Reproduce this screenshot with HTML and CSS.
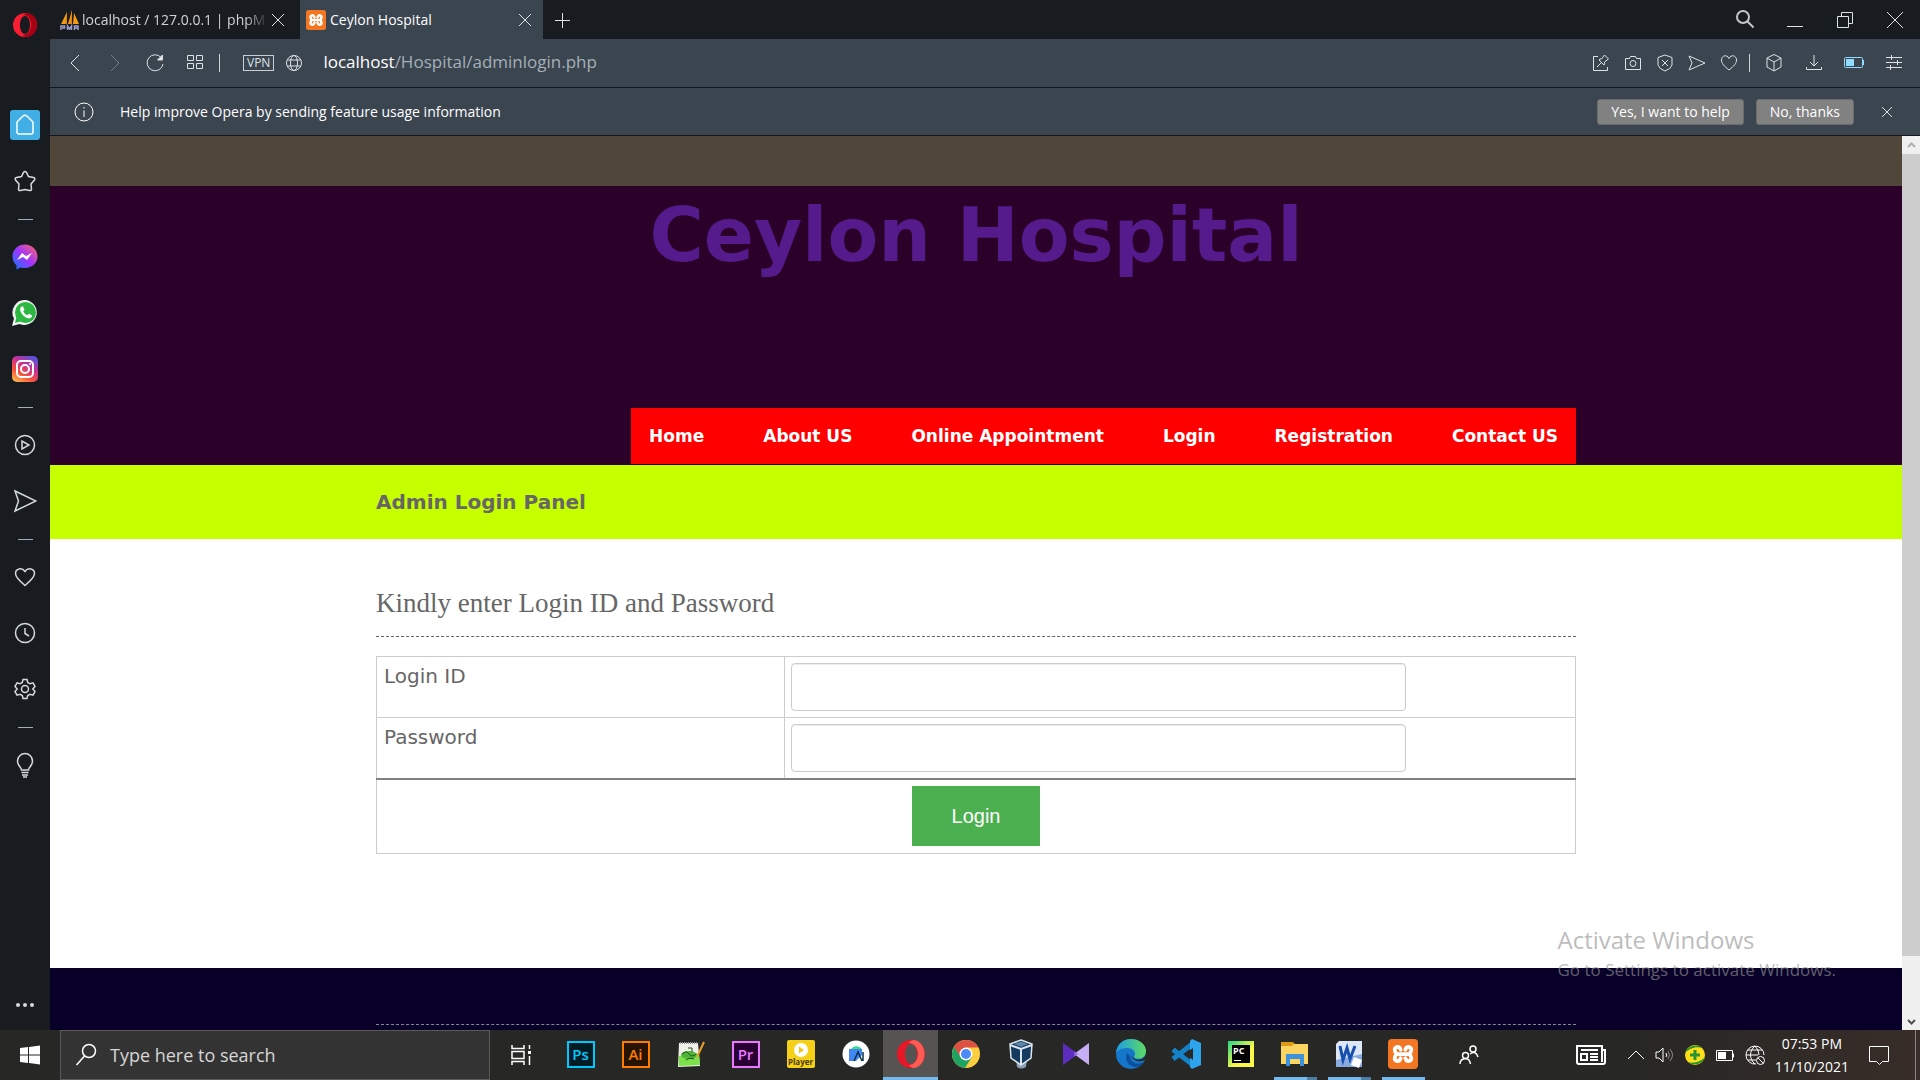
FILE: index.html
```html
<!DOCTYPE html>
<html lang="en">
<head>
<meta charset="utf-8">
<title>Ceylon Hospital</title>
<link rel="stylesheet" href="styles.css">
</head>
<body>
<div class="desktop">
  <aside class="sidebar">
    <button class="side-logo" aria-label="Opera menu"><svg width="26" height="26" viewBox="0 0 26 26"><path fill="#fa1e32" fill-rule="evenodd" d="M13 1a12 12 0 1 0 0 24 12 12 0 0 0 0-24zm0 3c3 0 5 4 5 9s-2 9-5 9-5-4-5-9 2-9 5-9z"/><path fill="#a70014" d="M15 1c7 1 10 6 10 12s-3 11-10 12c-2 0-3-1-4-2 5 0 8-4 8-10S16 3 11 3c1-1 2-2 4-2z"/></svg></button>
    <button class="side-item" aria-label="Home"><span class="home-tile"><svg class="line" width="22" height="24" viewBox="0 0 22 24"><path d="M3 9l6-6q2-1.500 4 0l6 6v10q0 2-2 2H5q-2 0-2-2z"/></svg></span></button>
    <button class="side-item" aria-label="Bookmarks"><svg class="line" width="24" height="24" viewBox="0 0 24 24"><path d="M10.500 3.500q1.500-2 3 0L15.500 7.500l5 1q2 .500 1 2.500l-3.500 4 .500 5q0 2-2 1.500l-4.500-1-4.500 1q-2 .500-2-1.500l.500-5L2.500 11q-1-2 1-2.500l5-1z"/></svg></button>
    <span class="side-rule"></span>
    <button class="side-item" aria-label="Messenger"><svg width="26" height="26" viewBox="0 0 26 26"><defs><linearGradient id="ms" x1="0" y1="1" x2="1" y2="0"><stop offset="0" stop-color="#0a7cff"/><stop offset=".5" stop-color="#a033ff"/><stop offset="1" stop-color="#ff6a60"/></linearGradient></defs><path fill="url(#ms)" d="M13 0.500C6 .500.500 5.500.500 12.500c0 3.500 1.500 6.500 4 9V25.500l4-2c1.500.500 3 .500 4.500.500 7 0 12.500-5 12.500-11.500S20 .500 13 .500z"/><path fill="#fff" d="M5 16l5-7 4 3 6-3-5 7-4-3z"/></svg></button>
    <button class="side-item" aria-label="WhatsApp"><svg width="26" height="26" viewBox="0 0 26 26"><path fill="#f2f2f2" d="M13.500 0A12.500 12.500 0 0 0 2 18.500L0 26l7.500-2A12.500 12.500 0 1 0 13.500 0z"/><circle cx="13.500" cy="12.500" r="10.500" fill="#2cb742"/><path fill="#2cb742" d="M3 23l1.500-6 4 4.500z"/><path fill="#fff" d="M9 7c1-1 2-1 2.500.500l1 2-1.300 1.700c1 2 2 3 4 4l1.800-1.500 2.500 1.300c1 .500.500 2-.500 2.700-2 1.500-5 .300-7.500-2C9 13 7 9.500 9 7z"/></svg></button>
    <button class="side-item" aria-label="Instagram"><svg width="26" height="26" viewBox="0 0 26 26"><defs><linearGradient id="ig" x1=".1" y1="1" x2=".7" y2="0"><stop offset="0" stop-color="#ffc04d"/><stop offset=".35" stop-color="#f7503c"/><stop offset=".7" stop-color="#c52f9b"/><stop offset="1" stop-color="#5b51d8"/></linearGradient></defs><rect width="26" height="26" rx="5" fill="url(#ig)"/><g fill="none" stroke="#fff" stroke-width="2"><rect x="5" y="5" width="16" height="16" rx="4"/><circle cx="13" cy="13" r="4"/></g><circle cx="18" cy="8" r="1" fill="#fff"/></svg></button>
    <span class="side-rule"></span>
    <button class="side-item" aria-label="Player"><svg class="line" width="24" height="24" viewBox="0 0 24 24"><circle cx="12" cy="12" r="9.500"/><path d="M9 8v8l7-4z"/></svg></button>
    <button class="side-item" aria-label="My Flow"><svg class="line" width="24" height="24" viewBox="0 0 24 24"><path d="M2 2l21 10L2 22l3.500-10z"/></svg></button>
    <span class="side-rule"></span>
    <button class="side-item" aria-label="Favourites"><svg class="line" width="24" height="24" viewBox="0 0 24 24"><path d="M12 20.500C6 15.500 2.500 12 2.500 8.500c0-5 6.500-6.500 9.500-2 3-4.500 9.500-3 9.500 2 0 3.500-3.500 7-9.500 12z"/></svg></button>
    <button class="side-item" aria-label="History"><svg class="line" width="24" height="24" viewBox="0 0 24 24"><circle cx="12" cy="12" r="9.500"/><path d="M12 7v5.500l4 2.500"/></svg></button>
    <button class="side-item" aria-label="Settings"><svg class="line" width="24" height="24" viewBox="0 0 24 24"><path d="M10 2.500h4l.7 3 2.300 1.300 3-1 2 3.600L19.800 12l2.200 2.600-2 3.600-3-1-2.300 1.300-.7 3h-4l-.7-3L7 17.200l-3 1-2-3.600L4.200 12 2 9.400l2-3.600 3 1 2.300-1.300z"/><circle cx="12" cy="12" r="3.500"/></svg></button>
    <span class="side-rule"></span>
    <button class="side-item" aria-label="Tips"><svg class="line" width="24" height="26" viewBox="0 0 24 26"><path d="M8.500 18c0-3-4-4-4-9a7.500 7.500 0 0 1 15 0c0 5-4 6-4 9zM8.500 20.500h7M9 23h6M10 25h4"/></svg></button>
    <button class="side-more" aria-label="More"><svg width="20" height="6" viewBox="0 0 20 6" fill="#d5dae0"><circle cx="3" cy="3" r="2"/><circle cx="10" cy="3" r="2"/><circle cx="17" cy="3" r="2"/></svg></button>
  </aside>

  <main class="browser">
    <div class="tabs">
      <div class="tab">
        <svg width="20" height="20" viewBox="0 0 20 20"><path fill="#f89c0e" d="M7 2L1 14h6zM12 0L8 14h4zM14 3l-1 11h6z"/><path fill="#d98019" d="M7 2v12H5zM12 0v14h-2z"/><path stroke="#9c9ec8" stroke-width="1.500" fill="none" d="M1 20v-4h3.500v2H2M7.500 20v-4l2 3 2-3v4M14.500 20v-4H18v4M14.500 18H18"/></svg>
        <span class="tab-name faded">localhost / 127.0.0.1 | phpM</span>
        <button class="icon" aria-label="Close tab"><svg class="line" width="16" height="16" viewBox="0 0 16 16"><path d="M2 2l12 12M14 2L2 14"/></svg></button>
      </div>
      <div class="tab active">
        <svg width="20" height="20" viewBox="0 0 32 32"><rect width="32" height="32" rx="4" fill="#f37623"/><path d="M13.500 11.500q-1-3.500-4-3Q5 10 9 16q-4 6 .500 7.500 3 .500 4-3M18.500 11.500q1-3.500 4-3Q27 10 23 16q4 6-.500 7.500-3 .500-4-3M10 16h12" fill="none" stroke="#fff" stroke-width="4" stroke-linecap="round"/></svg>
        <span class="tab-name">Ceylon Hospital</span>
        <button class="icon" aria-label="Close tab"><svg class="line" width="16" height="16" viewBox="0 0 16 16"><path d="M2 2l12 12M14 2L2 14"/></svg></button>
      </div>
      <button class="icon new-tab" aria-label="New tab"><svg class="line" width="16" height="16" viewBox="0 0 16 16"><path d="M8.500 1v15M1 8.500h15"/></svg></button>
      <div class="window-controls">
        <button class="icon" aria-label="Search tabs"><svg class="line bold" width="20" height="20" viewBox="0 0 20 20"><circle cx="8" cy="7" r="6"/><path d="M12.500 11.500l6 6"/></svg></button>
        <button class="icon" aria-label="Minimize"><svg class="line" width="20" height="20" viewBox="0 0 20 20"><path d="M2 16.500h16"/></svg></button>
        <button class="icon" aria-label="Restore"><svg class="line" width="20" height="20" viewBox="0 0 20 20"><path d="M2.500 6.500h11v11h-11zM6.500 6V2.500h11v11H14"/></svg></button>
        <button class="icon" aria-label="Close"><svg class="line" width="20" height="20" viewBox="0 0 20 20"><path d="M2 2l16 16M18 2L2 18"/></svg></button>
      </div>
    </div>

    <div class="toolbar">
      <div class="nav-tools">
        <button class="icon" aria-label="Back"><svg class="line" width="20" height="20" viewBox="0 0 20 20"><path d="M14 2l-8 8 8 8"/></svg></button>
        <button class="icon dim" aria-label="Forward"><svg class="line" width="20" height="20" viewBox="0 0 20 20"><path d="M6 2l8 8-8 8"/></svg></button>
        <button class="icon" aria-label="Reload"><svg class="line" width="20" height="20" viewBox="0 0 20 20"><path d="M16.500 5A8 8 0 1 0 18 11"/><path d="M17.500 2v5h-5z" fill="currentColor"/></svg></button>
        <button class="icon" aria-label="Speed dial"><svg class="line" width="20" height="20" viewBox="0 0 20 20"><path d="M2.500 2.500h6v5h-6zM11.500 2.500h6v5h-6zM2.500 10.500h6v5h-6zM11.500 10.500h6v5h-6z"/></svg></button>
      </div>
      <span class="bar"></span>
      <button class="vpn">VPN</button>
      <button class="icon" aria-label="Site information"><svg class="line" width="18" height="18" viewBox="0 0 18 18"><circle cx="9" cy="9" r="7.500"/><ellipse cx="9" cy="9" rx="3.500" ry="7.500"/><path d="M2.500 6h13M2.500 12h13"/></svg></button>
      <div class="address"><strong>localhost</strong>/Hospital/adminlogin.php</div>
      <div class="page-tools">
        <button class="icon" aria-label="Pin"><svg class="line" width="20" height="20" viewBox="0 0 20 20"><path d="M7 3.500H2.500v14h14V14M6 14l4-4M8 7l5 5q1-1 .500-3l4-3-4-4-3 4q-2-.500-2.500 1z"/></svg></button>
        <button class="icon" aria-label="Snapshot"><svg class="line" width="20" height="20" viewBox="0 0 20 20"><path d="M2.500 5.500h4l1-2h5l1 2h4v11h-15z"/><circle cx="10" cy="10.500" r="3"/></svg></button>
        <button class="icon" aria-label="Ad blocker"><svg class="line" width="20" height="20" viewBox="0 0 20 20"><path d="M10 2l7 2.500V12q-1 4-7 6-6-2-7-6V4.500zM7 7l6 6M13 7l-6 6"/></svg></button>
        <button class="icon" aria-label="Send to My Flow"><svg class="line" width="20" height="20" viewBox="0 0 20 20"><path d="M2 3l16 7-16 7 3-7z"/></svg></button>
        <button class="icon" aria-label="Add to bookmarks"><svg class="line" width="20" height="20" viewBox="0 0 20 20"><path d="M10 17C5 13 2.500 10.500 2.500 7c0-4.500 5.500-6 7.500-1.500C12 1 17.500 2.500 17.500 7c0 3.500-2.500 6-7.500 10z"/></svg></button>
      </div>
      <span class="bar"></span>
      <div class="browser-tools">
        <button class="icon" aria-label="Crypto wallet"><svg class="line" width="20" height="20" viewBox="0 0 20 20"><path d="M10 1.500l7 3.500v9l-7 4-7-4V5zM3 5l7 4 7-4M10 9v9"/></svg></button>
        <button class="icon" aria-label="Downloads"><svg class="line" width="20" height="20" viewBox="0 0 20 20"><path d="M10 2v11M6 9l4 4 4-4M2.500 14v2.500h15V14"/></svg></button>
        <button class="icon" aria-label="Battery saver"><svg width="20" height="20" viewBox="0 0 20 20"><rect x=".500" y="4.500" width="18" height="10" rx="1" fill="none" stroke="#8fdcff"/><path fill="#8fdcff" d="M2 6h8v7H2zM19 7h1v5h-1z"/></svg></button>
        <button class="icon" aria-label="Easy setup"><svg class="line" width="20" height="20" viewBox="0 0 20 20"><path d="M2 4.500h16M2 9.500h16M2 14.500h16M7.500 2v5M13.500 7v5M6.500 12v5"/></svg></button>
      </div>
    </div>

    <div class="notice">
      <svg class="line" width="20" height="20" viewBox="0 0 20 20"><circle cx="10" cy="10" r="9"/><path d="M10 8.500V15M10 5v1.500"/></svg>
      <p>Help improve Opera by sending feature usage information</p>
      <button class="notice-button">Yes, I want to help</button>
      <button class="notice-button">No, thanks</button>
      <button class="icon" aria-label="Dismiss"><svg class="line" width="14" height="14" viewBox="0 0 14 14"><path d="M2 2l10 10M12 2L2 12"/></svg></button>
    </div>

    <div class="viewport">
      <div class="page">
        <div class="topbar"></div>
        <header class="header">
          <div class="container">
            <h1><a href="#">Ceylon Hospital</a></h1>
            <nav class="menu">
              <a href="#">Home</a><a href="#">About US</a><a href="#">Online Appointment</a><a href="#">Login</a><a href="#">Registration</a><a href="#">Contact US</a>
            </nav>
          </div>
        </header>
        <div class="banner"><div class="container"><h2>Admin Login Panel</h2></div></div>
        <section class="content">
          <div class="container">
            <h3>Kindly enter Login ID and Password</h3>
            <form>
              <table class="login">
                <tr><td class="label"><label for="login">Login ID</label></td><td><input class="field" type="text" id="login"></td></tr>
                <tr><td class="label"><label for="password">Password</label></td><td><input class="field" type="password" id="password"></td></tr>
                <tr class="submit-row"><td colspan="2"><button class="submit" type="button">Login</button></td></tr>
              </table>
            </form>
          </div>
        </section>
        <footer class="footer"><div class="container"></div></footer>
      </div>
      <div class="scrollbar">
        <svg width="18" height="18" viewBox="0 0 18 18"><path d="M6 11l3.500-3.500L13 11" fill="none" stroke="#b0b0b0" stroke-width="2"/></svg>
        <span class="track"><span class="thumb"></span></span>
        <svg width="18" height="18" viewBox="0 0 18 18"><path d="M6 8l3.500 3.500L13 8" fill="none" stroke="#505050" stroke-width="2"/></svg>
      </div>
      <div class="watermark"><p class="watermark-title">Activate Windows</p><p>Go to Settings to activate Windows.</p></div>
    </div>
  </main>

  <div class="taskbar">
    <button class="start" aria-label="Start"><svg width="20" height="20" viewBox="0 0 20 20" fill="#fff"><path d="M0 3l8-1v7.500H0zM9 1.900L20 .500v9H9zM0 10.500h8V18l-8-1zM9 10.500h11v9L9 18.100z"/></svg></button>
    <label class="search"><svg width="22" height="26" viewBox="0 0 22 26" fill="none" stroke="#fff" stroke-width="1.500"><circle cx="14" cy="9" r="6.500"/><path d="M9.500 14L1.500 23"/></svg><input type="text" placeholder="Type here to search" aria-label="Search"></label>
    <button class="task-view" aria-label="Task view"><svg width="20" height="20" viewBox="0 0 20 20" fill="none" stroke="#fff" stroke-width="1.500"><path d="M1 0v3.500h12V0M1 20v-3.500h12V20M1 6.500h12v7H1zM18.500 0v4M18.500 11v9"/><path d="M17 6h3v3h-3z" fill="#fff" stroke="none"/></svg></button>
    <div class="apps">
      <button aria-label="Photoshop"><span class="adobe ps">Ps</span></button>
      <button aria-label="Illustrator"><span class="adobe ai">Ai</span></button>
      <button aria-label="Notepad++"><svg width="28" height="28" viewBox="0 0 28 28"><path fill="#f0f0ea" d="M2 3h19l2 23-22 1z"/><path fill="#7be04a" d="M2 16l20-3 1 12-21 1z"/><ellipse cx="12" cy="15" rx="8" ry="4" fill="#4fb63a"/><path d="M5 14q4-4 7 0t7 0M9 20q3-3 8-1M11 8h4v4" fill="none" stroke="#234d1f"/><path d="M27 2l-7 15" stroke="#e8a02c" stroke-width="2"/><path d="M3 3h18" stroke="#999" stroke-dasharray="1 1" stroke-width="2"/></svg></button>
      <button aria-label="Premiere Pro"><span class="adobe pr">Pr</span></button>
      <button aria-label="Player"><span class="player"><svg width="14" height="14" viewBox="0 0 14 14"><circle cx="7" cy="7" r="7" fill="#fff"/><path fill="#f3c613" d="M5 3.500v7l5-3.500z"/></svg>Player</span></button>
      <button aria-label="Android Studio"><svg width="28" height="28" viewBox="0 0 28 28"><circle cx="14" cy="14" r="13.500" fill="#fff"/><path fill="#3ddc84" d="M9 9q5-6 11 0z"/><path fill="#4285f4" d="M7 9h13v6l-6 6H7z"/><path d="M12 21l4-9 4 9M21 12v9" stroke="#083042" stroke-width="1.500" fill="none"/></svg></button>
      <button class="current" aria-label="Opera"><svg width="30" height="30" viewBox="0 0 30 30"><path fill="#e81727" fill-rule="evenodd" d="M15 1a14 14 0 1 0 0 28 14 14 0 0 0 0-28zm0 4c4 0 6 5 6 10s-2 10-6 10-6-5-6-10 2-10 6-10z"/><path fill="#ff5a54" d="M18 1c14 2 14 26 0 28-2 0-4-1-5-3 5 0 9-5 9-11S18 4 13 4c1-2 3-3 5-3z"/></svg></button>
      <button aria-label="Chrome"><svg width="28" height="28" viewBox="0 0 28 28"><circle cx="14" cy="14" r="14" fill="#ffcd40"/><path fill="#1da462" d="M14 14L1.900 7A14 14 0 0 0 13 28l7-11z"/><path fill="#dd5144" d="M2 7l6 9 6-8.500h12.500A14 14 0 0 0 2 7z"/><circle cx="14" cy="14" r="6.500" fill="#fff"/><circle cx="14" cy="14" r="5" fill="#4c8bf5"/></svg></button>
      <button aria-label="VirtualBox"><svg width="26" height="30" viewBox="0 0 26 30"><path fill="#8aa0b8" d="M8 20h11l-1 8q-5 3-9 0z"/><path fill="#163a5f" stroke="#dce6ef" stroke-width="1.500" d="M13 1l11 4-1 14-10 7L3 19 2 5z"/><path d="M2 6l11 4 11-4M13 10v15" stroke="#dce6ef" stroke-width="2" fill="none"/><path fill="#5d84a8" d="M6 5l7-2.500L20 5l-7 3z"/></svg></button>
      <button aria-label="Visual Studio"><svg width="28" height="26" viewBox="0 0 28 26"><path fill="#5c2dbf" d="M1 2l15 11L1 24z"/><path fill="#c7aef5" d="M27 2L12 13l15 11z"/><path fill="#9165e6" d="M16 13l-3.500 2.600L12 13l.500-2.600z"/></svg></button>
      <button aria-label="Edge"><svg width="30" height="30" viewBox="0 0 30 30"><defs><linearGradient id="eg" x1="0" x2="1"><stop offset="0" stop-color="#1b9de2"/><stop offset="1" stop-color="#5fdc62"/></linearGradient></defs><circle cx="15" cy="15" r="15" fill="#1477c9"/><path fill="url(#eg)" d="M0 14C1 5 7 0 15 0c9 0 15 6 15 12 0 7-7 9-11 7-2-1 0-2 0-4 0-4-4-6-8-6C5 9 1 12 0 14z"/><path fill="#0c4f9e" d="M11 14c-3 7 2 14 9 14 4 0 7-3 8-5-8 4-14 0-14-6z"/><path fill="#272725" d="M15 15c0 6 7 9 14 6l1 2V13c0 7-7 9-11 7-2-1-4-3-4-5z"/></svg></button>
      <button aria-label="Visual Studio Code"><svg width="30" height="30" viewBox="0 0 30 30"><path d="M2 10.500L22 26M2 20L22 4.500" stroke="#1581c8" stroke-width="5"/><path fill="#2da5ee" d="M21 0l9 4v22l-9 4-2-2V2z"/><path fill="#282826" d="M22 9v12l-8-6z"/></svg></button>
      <button aria-label="PyCharm"><svg width="26" height="26" viewBox="0 0 26 26"><defs><linearGradient id="pc" x1="0" y1="0" x2=".6" y2=".6"><stop offset="0" stop-color="#21d789"/><stop offset="1" stop-color="#fcf84a"/></linearGradient></defs><path fill="url(#pc)" d="M0 0h26v26H0z"/><path fill="#000" d="M4 4h18v18H4z"/><path fill="#fff" d="M6 19h7v1H6z"/><text class="pc" x="5" y="13">PC</text></svg></button>
      <button class="running grouped" aria-label="File Explorer"><svg width="28" height="26" viewBox="0 0 28 26"><path fill="#dc9a15" d="M0 1h12l3 3v6H0z"/><path fill="#fcd462" d="M0 5h11l2-2h14v20H0z"/><path fill="#3c92dc" d="M5 13h18v12h-4v-7H9v7H5z"/></svg></button>
      <button class="running grouped" aria-label="Word"><svg width="28" height="28" viewBox="0 0 28 28"><path fill="#dce8f8" d="M4 1h23v26H1V4z"/><path fill="#88abe0" d="M1 20l26-6v13H1z"/><path d="M5 6l3 14 4-12 3 11 5-13" fill="none" stroke="#164fae" stroke-width="3"/><path fill="#fff" d="M19 17l8 3-3 8-8-3z"/></svg></button>
      <button class="running" aria-label="XAMPP"><svg width="30" height="30" viewBox="0 0 32 32"><rect width="32" height="32" rx="4" fill="#f37623"/><path d="M13.500 11.500q-1-3.500-4-3Q5 10 9 16q-4 6 .500 7.500 3 .500 4-3M18.500 11.500q1-3.500 4-3Q27 10 23 16q4 6-.500 7.500-3 .500-4-3M10 16h12" fill="none" stroke="#fff" stroke-width="4" stroke-linecap="round"/></svg></button>
    </div>
    <button class="people" aria-label="People"><svg width="20" height="20" viewBox="0 0 20 20" fill="none" stroke="#fff" stroke-width="1.500"><circle cx="14" cy="4" r="3"/><circle cx="6.500" cy="10.500" r="3"/><path d="M1 19q0-5 5.500-5.500 4 0 5 5.500M11 9q6-4 8 3"/></svg></button>
    <div class="tray">
      <button class="news" aria-label="News"><svg width="30" height="20" viewBox="0 0 30 20" fill="none" stroke="#fff" stroke-width="2"><path d="M26 5V1H1v16q0 2 2 2h24q2 0 2-2V5h-3v12M5 5h17M14 9h8M14 12h8M14 15h8M5 9h6v6H5z"/></svg></button>
      <button aria-label="Show hidden icons"><svg class="white" width="18" height="20" viewBox="0 0 18 20"><path d="M1 14l8-8 8 8"/></svg></button>
      <button aria-label="Volume"><svg class="white" width="20" height="20" viewBox="0 0 20 20"><path d="M1 7h3l4-4v14l-4-4H1zM11 8q1.500 2 0 4"/><path stroke="#888" d="M13 6q3 4 0 8M15 4q5 6 0 12"/></svg></button>
      <button aria-label="Security"><svg width="20" height="20" viewBox="0 0 20 20"><circle cx="10" cy="10" r="10" fill="#ffde17"/><path fill="#27922f" d="M0 8C2 1 12-2 17 3 10 1 4 4 0 8zM20 12c-2 7-12 10-17 5 7 2 13-1 17-5z"/><path d="M10 5v10M5 10h10" stroke="#27922f" stroke-width="3"/></svg></button>
      <button aria-label="Battery"><svg class="white" width="20" height="20" viewBox="0 0 20 20"><path d="M1.500 5.500h16v10h-16zM18.500 8.500v4"/><path fill="#fff" stroke="none" d="M3 7h8v7H3z"/></svg></button>
      <button aria-label="Network"><svg class="white" width="20" height="20" viewBox="0 0 20 20"><path d="M11 19A9 9 0 1 1 19 10M1 10h12M3 5h14M3 15h8M10 1c-6 5-6 13 0 18M10 1q4 4 4 9"/><circle cx="15.500" cy="15.500" r="4"/><path d="M13 13l5 5"/></svg></button>
      <time class="clock"><span>07:53 PM</span><span>11/10/2021</span></time>
      <button class="notify" aria-label="Notifications"><svg class="white" width="20" height="20" viewBox="0 0 20 20"><path d="M.500 1.500h19v15h-6l-3 3-3-3h-7z"/></svg></button>
    </div>
    <button class="show-desktop" aria-label="Show desktop"></button>
  </div>
</div>
</body>
</html>
```
FILE: styles.css
```css
* { box-sizing: border-box; }
body, h1, h2, h3, p { margin: 0; }
body { font-family: "Open Sans", "Noto Sans", sans-serif; font-size: 14px; color: #fff; }
button { border: 0; padding: 0; background: none; color: inherit; font: inherit; }
svg { display: block; flex: none; }
.line { fill: none; stroke: currentColor; stroke-width: 1; }
.line.bold { stroke: #c4c7ca; stroke-width: 2; }
.white { fill: none; stroke: #fff; stroke-width: 1; }
.icon { display: grid; place-items: center; color: #dde2e6; }
.dim { opacity: .35; }

.desktop { display: grid; grid-template-columns: 50px minmax(0, 1fr); grid-template-rows: minmax(0, 1fr) 50px; height: 100vh; overflow: hidden; }

/* Opera sidebar */
.sidebar { display: flex; flex-direction: column; background: #181b20; color: #d5dae0; }
.sidebar .line { stroke-width: 1.5; }
.side-logo { display: grid; place-items: center; height: 50px; margin-bottom: 47px; }
.side-item { display: grid; place-items: center; height: 56px; }
.home-tile { display: grid; place-items: center; width: 30px; height: 30px; border-radius: 3px; background: #42aee6; color: #fff; }
.side-rule { display: grid; place-items: center; height: 20px; }
.side-rule::before { content: ""; width: 15px; height: 1px; background: #a3adb8; }
.side-more { display: grid; place-items: center; height: 50px; margin-top: auto; }

/* Tabs and toolbars */
.browser { display: flex; flex-direction: column; min-width: 0; min-height: 0; }
.tabs { display: flex; align-items: center; height: 39px; background: #181b20; }
.tab { display: flex; align-items: center; gap: 4px; width: 243px; height: 39px; padding: 0 10px 0 6px; color: #d0d3d6; }
.tab:first-child { gap: 2px; width: 250px; padding: 0 14px 0 10px; }
.tab.active { background: #3a4550; color: #fff; }
.tab-name { flex: 1; white-space: nowrap; }
.faded { -webkit-mask-image: linear-gradient(to right, #000 88%, transparent); mask-image: linear-gradient(to right, #000 88%, transparent); }
.new-tab { margin-left: 11px; }
.window-controls { display: flex; gap: 30px; margin-left: auto; padding-right: 15px; }
.toolbar { display: flex; align-items: center; height: 49px; padding: 0 16px 0 15px; background: #3a4550; border-bottom: 1px solid #14171b; }
.nav-tools, .browser-tools { display: flex; gap: 20px; }
.bar { width: 1px; height: 18px; margin: 0 14px; background: #d0d5da; }
.vpn { height: 16px; margin: 0 11px 0 9px; padding: 0 3px; border: 1px solid #c8ced3; color: #dde2e6; font-size: 12px; line-height: 14px; }
.address { flex: 1; margin-left: 20px; padding-bottom: 2px; color: #a5afb8; font-size: 17px; line-height: 24px; }
.address strong { color: #fff; font-weight: 400; }
.page-tools { display: flex; gap: 12px; }
.page-tools + .bar { margin: 0 14px 0 10px; }
.notice { display: flex; align-items: center; height: 48px; padding: 0 26px 0 24px; background: #3a4550; border-bottom: 1px solid #14171b; }
.notice p { flex: 1; margin-left: 26px; }
.notice-button { height: 26px; margin-right: 12px; padding: 0 13px; border: 1px solid #6c6c6c; border-radius: 3px; background: #818181; }
.notice .icon { margin-left: 14px; }

/* Web page */
.viewport { position: relative; display: flex; flex: 1; min-height: 0; overflow: hidden; }
.page { flex: 1; background: #fff; color: #666; font-family: Verdana, "DejaVu Sans", sans-serif; }
.container { max-width: 1200px; margin: 0 auto; }
.topbar { height: 50px; background: #50473a; }
.header { background: #2b0029; padding-bottom: 1px; }
.header .container { display: flex; flex-direction: column; }
h1 { height: 222px; font-size: 74px; line-height: 98px; text-align: center; }
h1 a { color: #551a8b; text-decoration: none; }
.menu { display: flex; align-self: flex-end; gap: 59px; padding: 0 18px; background: #f00; }
.menu a { color: #fff; font-size: 17px; font-weight: 700; line-height: 56px; text-decoration: none; white-space: nowrap; }
.banner { background: #c6ff00; }
h2 { font-size: 20px; line-height: 74px; }
.content { min-height: 429px; padding-top: 39px; }
h3 { padding-bottom: 8px; border-bottom: 1px dashed #666; font-family: Georgia, "Liberation Serif", serif; font-size: 27px; font-weight: 400; line-height: 50px; }
.login { width: 100%; margin-top: 19px; border-collapse: collapse; font-size: 20px; }
.login td { height: 61px; padding: 6px; border: 1px solid #ccc; vertical-align: top; }
.login .label { width: 34%; padding: 7px; }
.login .submit-row td { height: 74px; border-top: 2px solid #808080; text-align: center; }
.field { display: block; width: 79%; height: 48px; padding: 0 12px; border: 1px solid #ccc; border-radius: 4px; box-shadow: inset 0 1px 1px rgba(0, 0, 0, .08); font: inherit; }
.submit { display: block; width: 128px; height: 60px; margin: 0 auto; background: #4caf50; color: #fff; font-family: "Liberation Sans", sans-serif; }
.footer { height: 200px; padding-top: 56px; background: #080029; }
.footer .container { border-top: 1px dashed #888; }
.scrollbar { display: flex; flex-direction: column; width: 18px; background: #f0f0f0; }
.track { flex: 1; display: flex; padding-bottom: 56px; }
.thumb { flex: 1; background: #cdcdcd; }
.watermark { position: absolute; right: 84px; bottom: 47px; color: rgba(150, 150, 150, .65); font-size: 17px; line-height: 26px; }
.watermark-title { font-size: 24px; line-height: 34px; }

/* Windows taskbar */
.taskbar { grid-column: 1 / -1; display: flex; align-items: stretch; background: linear-gradient(to right, #272725 85%, #382d28); }
.taskbar button { display: grid; place-items: center; }
.start { width: 60px; }
.search { display: flex; align-items: center; gap: 13px; width: 430px; padding: 0 14px; border: 1px solid #5a5a5a; background: #333; }
.search input { flex: 1; min-width: 0; border: 0; padding: 0; outline: 0; background: none; color: #fff; font: inherit; font-size: 18px; }
.search input::placeholder { color: #d6d6d6; opacity: 1; }
.task-view { width: 62px; }
.apps { display: flex; margin-left: 1px; }
.apps button { width: 55px; padding-bottom: 2px; }
.apps .current { padding: 0; background: #555453; border-bottom: 3px solid #76b9ed; }
.apps .running { width: 54px; background: linear-gradient(#76b9ed, #76b9ed) center bottom / 43px 3px no-repeat; }
.apps .grouped { background-image: linear-gradient(to right, #76b9ed 33px, #4d7ea6 33px); }
.adobe { width: 28px; height: 27px; border: 2px solid; font-size: 15px; font-weight: 600; line-height: 22px; text-align: center; }
.ps { color: #00c8ff; background: #001d26; }
.ai { color: #ff7c00; background: #261300; }
.pr { color: #ea77ff; background: #2a0034; }
.player { display: grid; justify-items: center; width: 28px; padding: 3px 0 1px; border-radius: 2px; background: #f5d018; color: #4a3d00; font-size: 8px; font-weight: 700; line-height: 10px; }
.pc { fill: #fff; font: 700 9px "Open Sans", sans-serif; }
.people { width: 78px; }
.tray { display: flex; align-items: center; gap: 10px; margin-left: auto; padding-right: 26px; }
.tray .news { margin-right: 11px; }
.clock { display: grid; font-size: 14px; line-height: 23px; text-align: center; }
.notify { margin-left: 10px; }
.show-desktop { width: 5px; border-left: 1px solid #8a8580; }
```
